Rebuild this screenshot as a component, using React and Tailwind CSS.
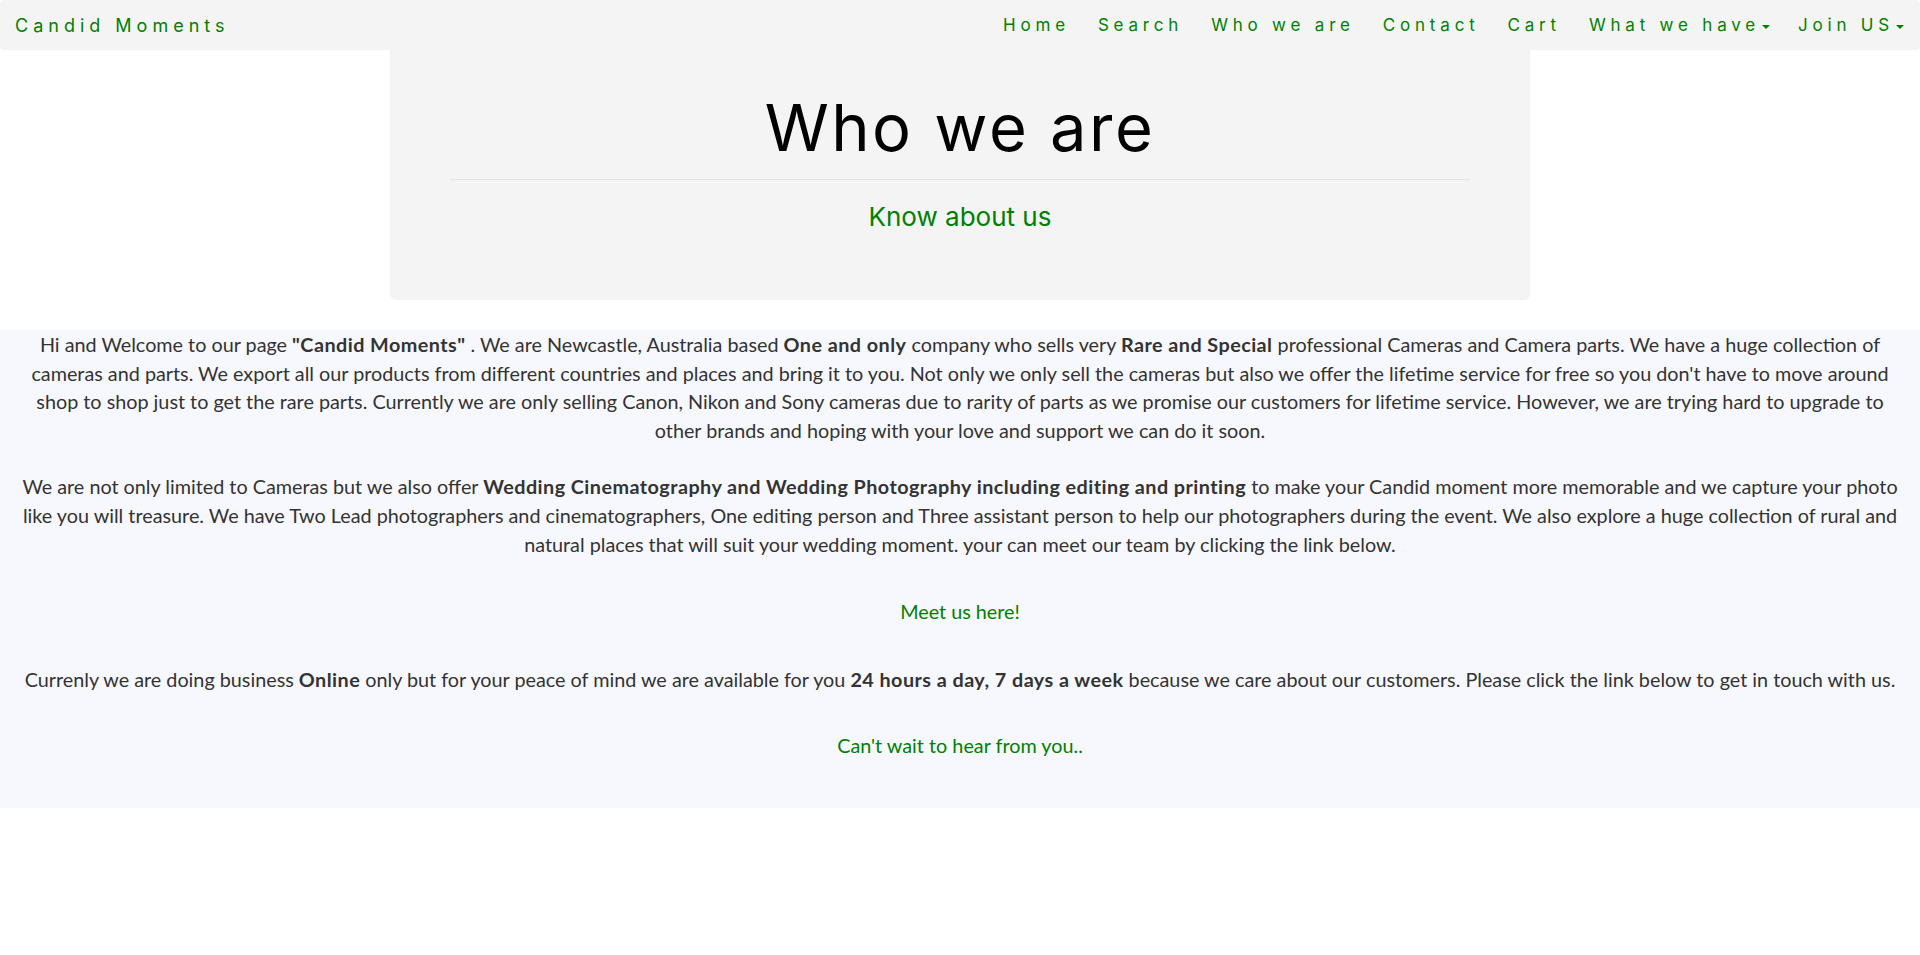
import React from 'react';

const navItems = [
  { label: 'Home' },
  { label: 'Search' },
  { label: 'Who we are' },
  { label: 'Contact' },
  { label: 'Cart' },
  { label: 'What we have', caret: true },
  { label: 'Join US', caret: true },
];

const Caret = () => (
  <span className="ml-[2px] inline-block w-0 h-0 border-t-[4px] border-t-[#008000] border-x-[4px] border-x-transparent align-middle"></span>
);

const B = ({ children }) => <b className="font-bold tracking-[0.45px]">{children}</b>;

const App = () => {
  return (
    <div className="min-h-[955px] bg-white font-['Lato','Liberation_Sans',sans-serif] text-[#333]">
      {/* Navbar */}
      <nav className="h-[50px] bg-[#f4f4f4] rounded-[4px] flex items-center justify-between font-['Inter','Liberation_Sans',sans-serif] text-[#008000]">
        <a className="pl-[15px] text-[18px] tracking-[5px]">Candid Moments</a>
        <ul className="flex items-center pr-[2px] pt-[2px]">
          {navItems.map((item, index) => (
            <li key={index} className="px-[14px] text-[17px] tracking-[4.8px] whitespace-nowrap">
              {item.label}
              {item.caret && <Caret />}
            </li>
          ))}
        </ul>
      </nav>

      {/* Jumbotron */}
      <div className="w-[1140px] mx-auto bg-[#f4f4f4] rounded-b-[6px] px-[60px] pt-[42px] pb-[65px] text-center font-['Inter','Liberation_Sans',sans-serif]">
        <h1 className="text-[65px] leading-[72px] tracking-[2.5px] text-black">Who we are</h1>
        <hr className="mt-[15px] border-t border-[#e6e6e6]" />
        <p className="mt-[19px] text-[26px] leading-[36px] text-[#008000]">Know about us</p>
      </div>

      {/* About section */}
      <div className="mt-[30px] bg-[#f7f8fd] px-[15px] pb-[48px] text-center text-[19.8px] leading-[28.6px]">
        <p>
          Hi and Welcome to our page <B>"Candid Moments"</B> . We are Newcastle, Australia based <B>One and only</B> company who sells very <B>Rare and Special</B> professional Cameras and Camera parts. We have a huge collection of cameras and parts. We export all our products from different countries and places and bring it to you. Not only we only sell the cameras but also we offer the lifetime service for free so you don't have to move around shop to shop just to get the rare parts. Currently we are only selling Canon, Nikon and Sony cameras due to rarity of parts as we promise our customers for lifetime service. However, we are trying hard to upgrade to other brands and hoping with your love and support we can do it soon.
        </p>
        <p className="mt-[28px]">
          We are not only limited to Cameras but we also offer <B>Wedding Cinematography and Wedding Photography including editing and printing</B> to make your Candid moment more memorable and we capture your photo like you will treasure. We have Two Lead photographers and cinematographers, One editing person and Three assistant person to help our photographers during the event. We also explore a huge collection of rural and natural places that will suit your wedding moment. your can meet our team by clicking the link below.
        </p>
        <p className="mt-[39px]">
          <a className="text-[#008000]">Meet us here!</a>
        </p>
        <p className="mt-[39px]">
          Currenly we are doing business <B>Online</B> only but for your peace of mind we are available for you <B>24 hours a day, 7 days a week</B> because we care about our customers. Please click the link below to get in touch with us.
        </p>
        <p className="mt-[38px]">
          <a className="text-[#008000]">Can't wait to hear from you..</a>
        </p>
      </div>
    </div>
  );
};

export default App;
